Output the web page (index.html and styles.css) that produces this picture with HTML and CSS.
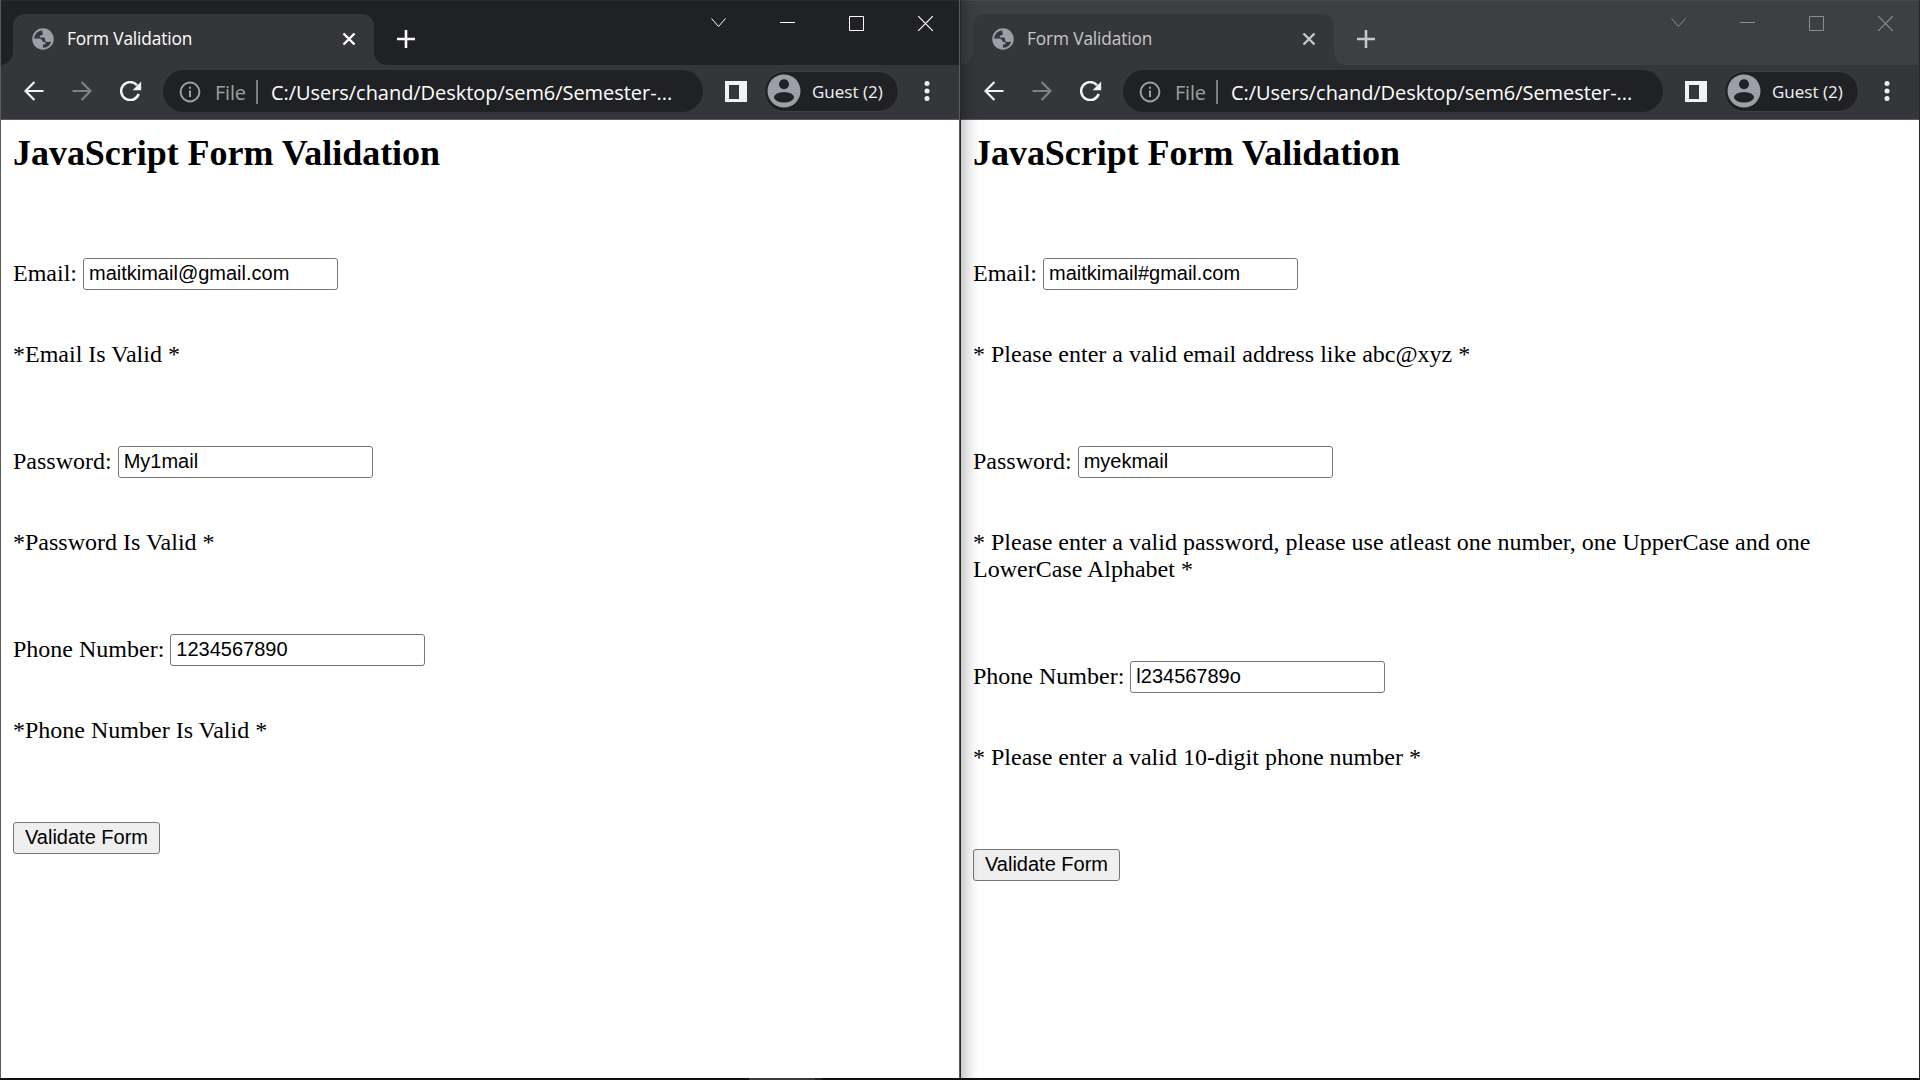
FILE: index.html
```html
<!DOCTYPE html>
<html lang="en">
<head>
<meta charset="utf-8">
<title>Form Validation</title>
<link rel="stylesheet" href="styles.css">
</head>
<body>
<svg class="defs" width="0" height="0">
  <symbol id="globe" viewBox="0 0 22 22"><circle cx="11" cy="11" r="9.8" fill="none" stroke="#9aa0a6" stroke-width="1.9"/><path fill="#9aa0a6" d="M10.8 1.2C16.5 1 21 5.500 21 11c0 1.400-.3 2.600-.8 3.800-1-1-2.200-1.400-3.400-.8-1.800.4-3.800-.4-3.800-2.600 0-1.200-.8-1.800-2.400-1.800H7.800V7.600c1.800 0 3-.6 3-2.200 0-.8-.6-1-.6-1.800zM1.300 10.500h5.200c2.600 0 4.200 1.300 4.200 3.400h2.700v2.700h-2.500v3.900C5.500 20.700 1.300 16.400 1.300 10.500z"/></symbol>
  <symbol id="cross" viewBox="0 0 14 14"><path d="M1.500 1.500l11 11m0-11l-11 11" fill="none" stroke="currentColor" stroke-width="2.400"/></symbol>
  <symbol id="plus" viewBox="0 0 18 18"><path d="M9 0v18M0 9h18" fill="none" stroke="currentColor" stroke-width="2.600"/></symbol>
  <symbol id="chevron" viewBox="0 0 69 46"><path d="M28.500 18.500l7 8 7-8" fill="none" stroke="currentColor"/></symbol>
  <symbol id="minimize" viewBox="0 0 69 46"><path d="M28 22.500h15" fill="none" stroke="currentColor"/></symbol>
  <symbol id="maximize" viewBox="0 0 69 46"><path d="M28.500 16.500h14v14h-14z" fill="none" stroke="currentColor"/></symbol>
  <symbol id="close" viewBox="0 0 69 46"><path d="M28.200 16.200l14.600 14.600m0-14.600L28.200 30.800" fill="none" stroke="currentColor" stroke-width="1.200"/></symbol>
  <symbol id="back" viewBox="0 0 20 20"><path d="M19.500 10H1.700M10.400 1L1.500 10l8.900 9" fill="none" stroke="currentColor" stroke-width="2.200"/></symbol>
  <symbol id="forward" viewBox="0 0 20 20"><path d="M.5 10h17.800M9.600 1l8.900 9-8.900 9" fill="none" stroke="currentColor" stroke-width="2.200"/></symbol>
  <symbol id="reload" viewBox="0 0 22 20"><path d="M18.700 13A9 9 0 1 1 17 4.200" fill="none" stroke="currentColor" stroke-width="2.500"/><path d="M21.200.6v8.600h-8.600z" fill="currentColor"/></symbol>
  <symbol id="info" viewBox="0 0 22 22"><circle cx="11" cy="11" r="9.400" fill="none" stroke="currentColor" stroke-width="2"/><path d="M10 5.800h2v2h-2zM10 9.600h2v6.400h-2z" fill="currentColor"/></symbol>
  <symbol id="panel" viewBox="0 0 22 21"><path fill-rule="evenodd" d="M0 0h22v21H0zM4 4v14h10V4z" fill="currentColor"/></symbol>
  <symbol id="avatar" viewBox="0 0 34 34"><circle cx="17" cy="17" r="16.500" fill="#9aa0a6"/><circle cx="17" cy="10.300" r="5" fill="#202124"/><ellipse cx="17" cy="23.200" rx="10" ry="5.300" fill="#202124"/></symbol>
  <symbol id="dots" viewBox="0 0 6 20"><g fill="currentColor"><circle cx="3" cy="2.500" r="2.500"/><circle cx="3" cy="10" r="2.500"/><circle cx="3" cy="17.500" r="2.500"/></g></symbol>
</svg>

<main class="desktop">
  <section class="window active">
    <header class="tabstrip">
      <div class="tab">
        <svg class="favicon"><use href="#globe"/></svg>
        <span class="tab-title">Form Validation</span>
        <svg class="tab-close"><use href="#cross"/></svg>
      </div>
      <svg class="new-tab"><use href="#plus"/></svg>
      <div class="controls">
        <svg><use href="#chevron"/></svg>
        <svg><use href="#minimize"/></svg>
        <svg><use href="#maximize"/></svg>
        <svg><use href="#close"/></svg>
      </div>
    </header>
    <nav class="toolbar">
      <svg class="nav-icon"><use href="#back"/></svg>
      <svg class="nav-icon disabled"><use href="#forward"/></svg>
      <svg class="reload"><use href="#reload"/></svg>
      <div class="omnibox">
        <svg class="info"><use href="#info"/></svg>
        <span class="scheme">File</span>
        <span class="divider"></span>
        <span class="url">C:/Users/chand/Desktop/sem6/Semester-...</span>
      </div>
      <svg class="panel"><use href="#panel"/></svg>
      <div class="profile">
        <svg class="avatar"><use href="#avatar"/></svg>
        <span class="guest">Guest (2)</span>
      </div>
      <svg class="dots"><use href="#dots"/></svg>
    </nav>
    <form class="page">
      <h2>JavaScript Form Validation</h2>
      <div class="row"><label for="e1">Email:</label><input id="e1" type="text" value="maitkimail@gmail.com"></div>
      <p>*Email Is Valid *</p>
      <div class="row"><label for="p1">Password:</label><input id="p1" type="text" value="My1mail"></div>
      <p>*Password Is Valid *</p>
      <div class="row"><label for="n1">Phone Number:</label><input id="n1" type="text" value="1234567890"></div>
      <p>*Phone Number Is Valid *</p>
      <button type="button">Validate Form</button>
    </form>
  </section>

  <section class="window inactive">
    <header class="tabstrip">
      <div class="tab">
        <svg class="favicon"><use href="#globe"/></svg>
        <span class="tab-title">Form Validation</span>
        <svg class="tab-close"><use href="#cross"/></svg>
      </div>
      <svg class="new-tab"><use href="#plus"/></svg>
      <div class="controls">
        <svg><use href="#chevron"/></svg>
        <svg><use href="#minimize"/></svg>
        <svg><use href="#maximize"/></svg>
        <svg><use href="#close"/></svg>
      </div>
    </header>
    <nav class="toolbar">
      <svg class="nav-icon"><use href="#back"/></svg>
      <svg class="nav-icon disabled"><use href="#forward"/></svg>
      <svg class="reload"><use href="#reload"/></svg>
      <div class="omnibox">
        <svg class="info"><use href="#info"/></svg>
        <span class="scheme">File</span>
        <span class="divider"></span>
        <span class="url">C:/Users/chand/Desktop/sem6/Semester-...</span>
      </div>
      <svg class="panel"><use href="#panel"/></svg>
      <div class="profile">
        <svg class="avatar"><use href="#avatar"/></svg>
        <span class="guest">Guest (2)</span>
      </div>
      <svg class="dots"><use href="#dots"/></svg>
    </nav>
    <form class="page">
      <h2>JavaScript Form Validation</h2>
      <div class="row"><label for="e2">Email:</label><input id="e2" type="text" value="maitkimail#gmail.com"></div>
      <p>* Please enter a valid email address like abc@xyz *</p>
      <div class="row"><label for="p2">Password:</label><input id="p2" type="text" value="myekmail"></div>
      <p>* Please enter a valid password, please use atleast one number, one UpperCase and one LowerCase Alphabet *</p>
      <div class="row"><label for="n2">Phone Number:</label><input id="n2" type="text" value="l23456789o"></div>
      <p>* Please enter a valid 10-digit phone number *</p>
      <button type="button">Validate Form</button>
    </form>
  </section>
</main>
<footer class="taskbar"><span class="taskbar-item"></span><span class="taskbar-edge"></span></footer>
</body>
</html>
```
FILE: styles.css
```css
* { box-sizing: border-box; }
body { margin: 0; width: 1920px; height: 1080px; overflow: hidden; background: #101010; }
.defs { display: none; }
svg { display: block; flex: none; }

.desktop { display: grid; grid-template-columns: 960px 960px; height: 1078px; }
.window {
  --frame: #202124;
  --edge: #27282a;
  position: relative;
  display: flex;
  flex-direction: column;
  border: solid #5c5c5e;
  border-width: 0 1px;
  background: #fff;
  font-family: "Open Sans", "Noto Sans", sans-serif;
  color: #fff;
}
.inactive { --frame: #3c4043; --edge: #484c4f; border-color: #27282a; }
.inactive::after {
  content: "";
  position: absolute;
  inset: 0 auto 0 0;
  width: 19px;
  background: linear-gradient(90deg, rgba(0,0,0,.2), rgba(0,0,0,.1) 35%, rgba(0,0,0,.03) 70%, transparent);
}

.tabstrip { display: flex; height: 65px; background: var(--frame); border-top: 1px solid var(--edge); }
.tab {
  position: relative;
  display: flex;
  align-items: center;
  width: 361px;
  height: 51px;
  margin: 13px 0 0 12px;
  padding: 0 18px 1px 19px;
  border-radius: 12px 12px 0 0;
  background: #35363a;
}
.tab::before, .tab::after { content: ""; position: absolute; bottom: 0; width: 12px; height: 12px; }
.tab::before { left: -12px; background: radial-gradient(circle at 0 0, transparent 11.5px, #35363a 12px); }
.tab::after { right: -12px; background: radial-gradient(circle at 100% 0, transparent 11.5px, #35363a 12px); }
.favicon { width: 22px; height: 22px; margin-right: 13px; }
.tab-title { font-size: 17.3px; line-height: 24px; letter-spacing: -0.13px; white-space: nowrap; }
.tab-close { width: 14px; height: 14px; margin-left: auto; }
.new-tab { width: 18px; height: 18px; margin: 29px 0 0 23px; }
.controls { display: flex; margin: -1px 0 0 auto; }
.controls svg { width: 69px; height: 46px; }
.inactive .tab-title, .inactive .tab-close, .inactive .new-tab { color: #c6c7c9; }
.inactive .controls { color: #8b8e90; }

.toolbar {
  display: flex;
  align-items: center;
  height: 55px;
  padding: 0 29.5px 2px 23px;
  background: #35363a;
  border-bottom: 1px solid #5a5a5d;
  color: #f1f3f4;
}
.nav-icon { width: 20px; height: 20px; margin-right: 28px; }
.disabled { color: #808185; }
.reload { width: 22px; height: 20px; }
.omnibox {
  display: flex;
  align-items: center;
  width: 540px;
  height: 42px;
  margin-left: 21px;
  padding: 2px 0 0 16px;
  border-radius: 21px;
  background: #202124;
  font-size: 20px;
  white-space: nowrap;
}
.info { width: 22px; height: 22px; color: #9aa0a6; }
.scheme { width: 41px; margin-left: 14px; color: #9aa0a6; letter-spacing: -0.2px; }
.divider { width: 2px; height: 24px; background: #7b7f84; margin-right: 13px; }
.url { color: #fff; letter-spacing: -0.05px; }
.panel { width: 22px; height: 21px; margin-left: 22px; }
.profile {
  display: flex;
  align-items: center;
  width: 135px;
  height: 41px;
  margin-left: 17px;
  padding-left: 2px;
  border: 1px solid #3f4044;
  border-radius: 21px;
  background: #202124;
}
.avatar { width: 34px; height: 34px; }
.guest { margin-left: 11px; font-size: 17px; white-space: nowrap; }
.dots { width: 6px; height: 20px; margin-left: auto; }

.page {
  display: flex;
  flex-direction: column;
  align-items: flex-start;
  padding: 13px 12px 12px;
  color: #000;
  font: 24px/27px "Liberation Serif", "Times New Roman", serif;
}
.page h2 { margin: 0 0 84px; font-size: 36px; line-height: 41px; letter-spacing: -0.04px; }
.page p { margin: 51px 0 78px; }
.row { display: flex; align-items: center; gap: 6px; height: 32px; }
.row label { padding-bottom: 2px; }
.row input {
  width: 255px;
  height: 32px;
  margin: 0;
  padding: 0 5px 2px;
  border: 1px solid #767676;
  border-radius: 3px;
  background: #fff;
  color: #000;
  font: 20px "Liberation Sans", Arial, sans-serif;
}
.page button {
  width: 147px;
  height: 32px;
  padding: 0 0 2px;
  border: 1px solid #767676;
  border-radius: 3px;
  background: #efefef;
  color: #000;
  font: 20px "Liberation Sans", Arial, sans-serif;
}

.taskbar { display: flex; height: 2px; padding-left: 749px; background: #101010; }
.taskbar-item { width: 66px; background: #3a3a3a; }
.taskbar-edge { width: 7px; background: #242424; }
```
